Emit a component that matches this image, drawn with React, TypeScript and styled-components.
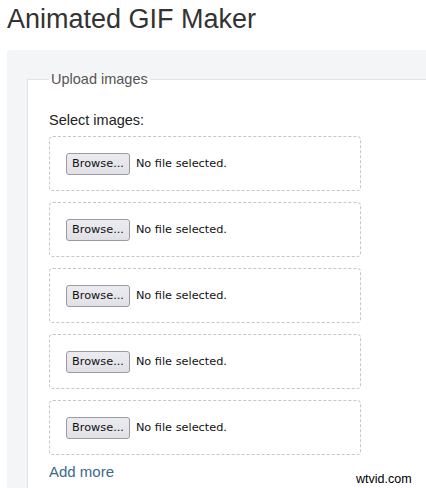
import React from 'react';
import styled, { createGlobalStyle } from 'styled-components';

const GlobalStyle = createGlobalStyle`
  html, body {
    margin: 0;
    padding: 0;
    background: #fff;
    overflow: hidden;
  }
  body {
    font-family: 'Liberation Sans', Arial, sans-serif;
  }
`;

const Page = styled.div`
  position: relative;
  width: 426px;
  height: 488px;
  overflow: hidden;
`;

const Title = styled.h1`
  margin: 4px 0 15px 7px;
  font-size: 27px;
  line-height: 31px;
  font-weight: normal;
  color: #333;
  white-space: nowrap;
`;

const Panel = styled.div`
  margin-left: 7px;
  width: 480px;
  padding: 21px 0 0 20px;
  background: #f4f5f6;
  border-radius: 3px;
`;

const Fieldset = styled.fieldset`
  margin: 0;
  padding: 24px 0 20px 21px;
  border: 1px solid #e0e2e4;
  background: #fff;
`;

const Legend = styled.legend`
  padding: 0 2px;
  font-size: 14.5px;
  line-height: 17px;
  color: #555;
`;

const Label = styled.div`
  font-size: 14.5px;
  line-height: 17px;
  color: #222;
  margin-bottom: 7px;
`;

const FileBox = styled.div`
  box-sizing: border-box;
  width: 312px;
  height: 55px;
  margin-bottom: 11px;
  padding: 0 16px;
  border: 1px dashed #c6c6c6;
  border-radius: 4px;
  display: flex;
  align-items: center;
  gap: 6px;
  &:last-of-type {
    margin-bottom: 8px;
  }
`;

const Browse = styled.button`
  box-sizing: border-box;
  height: 22px;
  padding: 0 5px;
  border: 1px solid #9a9aa0;
  border-radius: 3px;
  background: linear-gradient(#ececf0, #e0e0e6);
  font-family: 'DejaVu Sans', Verdana, sans-serif;
  font-size: 11.3px;
  line-height: 14px;
  color: #111;
`;

const FileName = styled.span`
  font-family: 'DejaVu Sans', Verdana, sans-serif;
  font-size: 11.3px;
  color: #111;
`;

const AddMore = styled.a`
  display: block;
  font-size: 15px;
  line-height: 17px;
  color: #3a6a8c;
  text-decoration: none;
`;

const Watermark = styled.div`
  position: absolute;
  left: 356px;
  top: 472px;
  font-size: 12.5px;
  color: #000;
`;

export default function App() {
  const boxes = [0, 1, 2, 3, 4];
  return (
    <Page>
      <GlobalStyle />
      <Title>Animated GIF Maker</Title>
      <Panel>
        <Fieldset>
          <Legend>Upload images</Legend>
          <Label>Select images:</Label>
          <div>
            {boxes.map((i) => (
              <FileBox key={i}>
                <Browse type="button">Browse...</Browse>
                <FileName>No file selected.</FileName>
              </FileBox>
            ))}
          </div>
          <AddMore href="#">Add more</AddMore>
        </Fieldset>
      </Panel>
      <Watermark>wtvid.com</Watermark>
    </Page>
  );
}
